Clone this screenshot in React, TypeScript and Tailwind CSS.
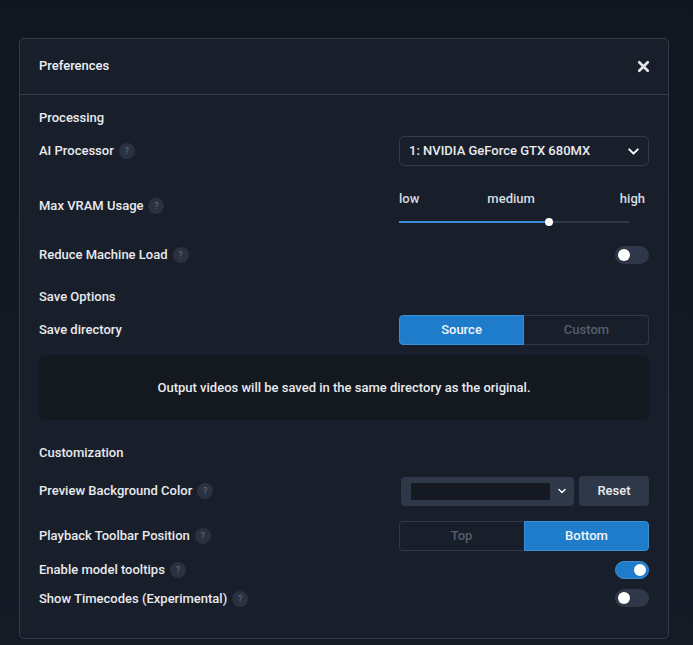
import { ChevronDown, X } from "lucide-react";

function Help() {
  return (
    <span className="ml-[5px] flex h-4 w-4 shrink-0 items-center justify-center rounded-full bg-[#2a3140] text-[9px] font-medium text-[#5d6574]">
      ?
    </span>
  );
}

function Label({ text, help = true, extra = "" }: { text: string; help?: boolean; extra?: string }) {
  return (
    <div className={`flex items-center text-[13px] font-medium leading-[22px] text-[#e8eaed] ${extra}`}>
      <span>{text}</span>
      {help && <Help />}
    </div>
  );
}

function Toggle({ on = false }: { on?: boolean }) {
  return (
    <div
      className={
        on
          ? "flex h-[18px] w-[34px] items-center justify-end rounded-full border border-[#3b8fd6] bg-[#1f7ccb] pr-[2px]"
          : "flex h-[18px] w-[34px] items-center rounded-full bg-[#2f3848] pl-[3px]"
      }
    >
      <div className="h-3 w-3 rounded-full bg-white" />
    </div>
  );
}

function Segment({ left, right, active }: { left: string; right: string; active: "left" | "right" }) {
  const on = "w-[125px] flex items-center justify-center bg-[#1f7ccb] border border-[#3b8fd6] text-[#f1f5f9]";
  const offL = "w-[125px] flex items-center justify-center border border-r-0 border-[#2f3848] pr-[1px] text-[#565e6c]";
  const offR = "w-[125px] flex items-center justify-center border border-l-0 border-[#2f3848] pl-[1px] text-[#565e6c]";
  return (
    <div className="flex h-[30px] w-[250px] text-[13px] font-medium">
      <div className={`${active === "left" ? on : offL} rounded-l-[4px]`}>{left}</div>
      <div className={`${active === "right" ? on : offR} rounded-r-[4px]`}>{right}</div>
    </div>
  );
}

export default function App() {
  return (
    <div className="h-[645px] w-[693px] overflow-hidden bg-gradient-to-b from-[#11161f] to-[#151b26] pl-[19px] pt-[38px] font-['Roboto',sans-serif]">
      <div className="h-[601px] w-[650px] rounded-[5px] border border-[#333b4a] bg-[#181f2b]">
        <div className="flex h-[56px] items-center justify-between border-b border-[#333b4a] pl-[19px] pr-[16px]">
          <span className="pb-[2px] text-[13px] font-medium text-[#eef0f3]">Preferences</span>
          <X className="h-[17px] w-[17px] text-[#e4e6ea]" strokeWidth={3.8} />
        </div>

        <div className="pl-[19px] pr-[19px] pt-[12px]">
          <Label text="Processing" help={false} />

          <div className="mt-[7px] flex h-[30px] items-center justify-between">
            <Label text="AI Processor" />
            <div className="flex h-[30px] w-[250px] items-center justify-between rounded-[5px] border border-[#333b4a] pl-[9px] pr-[6px] text-[13px] font-medium text-[#e8eaed]">
              <span>1: NVIDIA GeForce GTX 680MX</span>
              <ChevronDown className="h-[17px] w-[17px] text-white" strokeWidth={2.8} />
            </div>
          </div>

          <div className="mt-[11px] flex h-[58px] items-center justify-between">
            <Label text="Max VRAM Usage" />
            <div className="w-[250px] self-end">
              <div className="flex h-5 items-center pr-1 text-[13px] font-medium text-[#d9dce1]">
                <span>low</span>
                <span className="ml-[68px]">medium</span>
                <span className="ml-auto">high</span>
              </div>
              <div className="flex h-[26px] w-[230px] items-center">
                <div className="h-[2px] w-[150px] bg-[#3d8bd4]" />
                <div className="z-10 -mx-1 h-2 w-2 shrink-0 rounded-full bg-white" />
                <div className="h-[2px] flex-1 bg-[#2f3848]" />
              </div>
            </div>
          </div>

          <div className="mt-[11px] flex h-[18px] items-center justify-between">
            <Label text="Reduce Machine Load" />
            <Toggle />
          </div>

          <div className="mt-[22px]">
            <Label text="Save Options" help={false} />
          </div>

          <div className="mt-[7px] flex h-[30px] items-center justify-between">
            <Label text="Save directory" help={false} />
            <Segment left="Source" right="Custom" active="left" />
          </div>

          <div className="mt-[10px] flex h-[65px] items-center justify-center rounded-[5px] bg-[#14181f] text-[13px] font-medium text-[#e8eaed]">
            Output videos will be saved in the same directory as the original.
          </div>

          <div className="mt-[22px]">
            <Label text="Customization" help={false} />
          </div>

          <div className="mt-[12px] flex h-[30px] items-center justify-between">
            <Label text="Preview Background Color" />
            <div className="flex items-center gap-[5px]">
              <div className="flex h-[29px] w-[173px] items-center rounded-[4px] bg-[#2f3848] pl-[10px]">
                <div className="h-[17px] w-[139px] bg-[#151921]" />
                <ChevronDown className="ml-[6px] h-[12px] w-[12px] text-white" strokeWidth={2.8} />
              </div>
              <div className="flex h-[30px] w-[70px] items-center justify-center rounded-[4px] bg-[#2f3848] text-[13px] font-medium text-[#e8eaed]">
                Reset
              </div>
            </div>
          </div>

          <div className="mt-[15px] flex h-[30px] items-center justify-between">
            <Label text="Playback Toolbar Position" />
            <Segment left="Top" right="Bottom" active="right" />
          </div>

          <div className="mt-[10px] flex h-[18px] items-center justify-between">
            <Label text="Enable model tooltips" />
            <Toggle on />
          </div>

          <div className="mt-[10px] flex h-[18px] items-center justify-between">
            <Label text="Show Timecodes (Experimental)" extra="pt-[2px]" />
            <Toggle />
          </div>
        </div>
      </div>
    </div>
  );
}
